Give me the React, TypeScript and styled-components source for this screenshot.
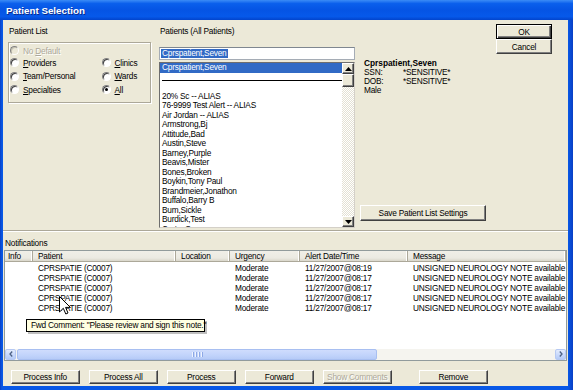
import React from 'react';
import styled, { createGlobalStyle } from 'styled-components';

const GlobalStyle = createGlobalStyle`
    html, body {
        margin: 0;
        padding: 0;
        background: #ffffff;
    }
    body {
        font-family: "Liberation Sans", Arial, sans-serif;
        font-size: 8.3px;
        letter-spacing: -0.22px;
        color: #000;
    }
    * {
        box-sizing: border-box;
    }
`;

const Window = styled.div`
    position: relative;
    width: 573px;
    height: 390px;
    display: flex;
    flex-direction: column;
    overflow: hidden;
    background: linear-gradient(90deg, #0a3fc4 0px, #0858e6 2px, #0858e6 568px, #0a3fc4 573px);
`;

const TitleBar = styled.div`
    flex: none;
    height: 20px;
    display: flex;
    align-items: center;
    padding: 1px 0 0 6px;
    background: linear-gradient(
        180deg,
        #3b8cf6 0%,
        #0a5fec 18%,
        #0554e4 50%,
        #0659ea 82%,
        #0244cc 100%
    );
    color: #fff;
    font-weight: bold;
    font-size: 9.8px;
    letter-spacing: 0;
    text-shadow: 1px 1px 0 #0b2a8a;
`;

const Body = styled.div`
    flex: 1;
    display: flex;
    flex-direction: column;
    margin: 0 5px 4px 3px;
    background: #ece9d8;
    min-height: 0;
`;

/* ---------- top pane ---------- */

const TopPane = styled.div`
    flex: none;
    height: 211px;
    display: flex;
    padding-top: 4px;
    border-bottom: 1px solid #aca899;
    box-shadow: 0 1px 0 #ffffff;
`;

const LeftCol = styled.div`
    width: 143px;
    margin-left: 5px;
    display: flex;
    flex-direction: column;
`;

const PatientsCol = styled.div`
    width: 196px;
    margin-left: 8px;
    display: flex;
    flex-direction: column;
`;

const InfoCol = styled.div`
    width: 130px;
    margin-left: 5px;
    display: flex;
    flex-direction: column;
    padding-top: 34.6px;
    padding-bottom: 9.5px;
`;

const ButtonCol = styled.div`
    width: 56px;
    margin-left: 6px;
    display: flex;
    flex-direction: column;
`;

const Caption = styled.div`
    height: 10px;
    line-height: 10px;
    margin-top: 2px;
    padding-left: 1px;
    white-space: nowrap;
`;

const GroupBox = styled.div`
    margin-top: 6px;
    height: 61px;
    border: 1px solid #aca899;
    box-shadow: inset 1px 1px 0 #ffffff, 1px 1px 0 #ffffff;
    display: grid;
    grid-template-columns: 91.5px 1fr;
    grid-template-rows: 11px 13px 14px 13px;
    padding: 2px 0 0 1px;
`;

const RadioRow = styled.label<{ $disabled?: boolean }>`
    display: flex;
    align-items: center;
    gap: 4px;
    white-space: nowrap;
    color: ${(p) => (p.$disabled ? '#aca899' : '#000')};
    text-shadow: ${(p) => (p.$disabled ? '1px 1px 0 #ffffff' : 'none')};
`;

const RadioCircle = styled.span<{ $checked?: boolean; $disabled?: boolean }>`
    position: relative;
    flex: none;
    width: 9px;
    height: 9px;
    border-radius: 50%;
    border: 1px solid;
    border-color: #808080 #ffffff #ffffff #808080;
    background: ${(p) => (p.$disabled ? '#ece9d8' : '#ffffff')};
    box-shadow: inset 1px 1px 0 ${(p) => (p.$disabled ? '#c5c2b2' : '#404040')};

    &::after {
        content: '';
        display: ${(p) => (p.$checked ? 'block' : 'none')};
        position: absolute;
        left: 2px;
        top: 2px;
        width: 3px;
        height: 3px;
        border-radius: 50%;
        background: #000;
    }
`;

const EditBox = styled.div`
    margin-top: 11px;
    height: 13px;
    background: #fff;
    border: 1px solid #a5acb5;
    border-top-color: #7f8790;
    display: flex;
    align-items: center;
    padding-left: 1px;
`;

const Highlight = styled.span`
    background: #316ac5;
    color: #fff;
    line-height: 9px;
    padding: 0 1px;
`;

const ListBox = styled.div`
    margin-top: 2px;
    height: 166px;
    display: flex;
    background: #fff;
    border: 1px solid;
    border-color: #6e6e6e #d4d0c8 #d4d0c8 #6e6e6e;
`;

const ListItems = styled.div`
    flex: 1;
    overflow: hidden;
`;

const ListItem = styled.div<{ $selected?: boolean }>`
    height: 9.5px;
    line-height: 9.5px;
    padding-left: 2px;
    white-space: nowrap;
    background: ${(p) => (p.$selected ? '#316ac5' : 'transparent')};
    color: ${(p) => (p.$selected ? '#fff' : '#000')};
`;

const SeparatorItem = styled.div`
    height: 9.5px;
    padding: 0 0 0 2px;
    display: flex;
    align-items: flex-end;

    &::after {
        content: '';
        flex: 1;
        height: 1px;
        margin-bottom: 1px;
        background: #000;
    }
`;

const VScroll = styled.div`
    width: 12px;
    flex: none;
    display: flex;
    flex-direction: column;
    background: repeating-conic-gradient(#ffffff 0 25%, #e4e1d3 0 50%) 0 0 / 2px 2px;
`;

const ClassicBtn = styled.div<{ $h: number }>`
    height: ${(p) => p.$h}px;
    flex: none;
    display: flex;
    align-items: center;
    justify-content: center;
    background: #ece9d8;
    border: 1px solid;
    border-color: #ffffff #404040 #404040 #ffffff;
    box-shadow: inset -1px -1px 0 #808080;
`;

const Track = styled.div`
    flex: 1;
`;

const InfoName = styled.div`
    font-weight: bold;
    line-height: 9.3px;
    padding-left: 4px;
    letter-spacing: 0;
`;

const InfoLine = styled.div`
    display: flex;
    line-height: 9.3px;
    padding-left: 4px;
`;

const InfoKey = styled.span`
    width: 39px;
`;

const Button = styled.button<{ $default?: boolean; $w?: number; $h?: number }>`
    flex: none;
    width: ${(p) => (p.$w ? `${p.$w}px` : '100%')};
    height: ${(p) => p.$h ?? 15}px;
    padding: 0;
    font-family: inherit;
    font-size: 8.3px;
    letter-spacing: -0.22px;
    color: #000;
    background: #ece9d8;
    border: 1px solid;
    border-color: ${(p) => (p.$default ? '#000' : '#ffffff #404040 #404040 #ffffff')};
    box-shadow: ${(p) =>
        p.$default
            ? 'inset 1px 1px 0 #ffffff, inset -1px -1px 0 #404040, inset -2px -2px 0 #808080'
            : 'inset -1px -1px 0 #808080'};
    &:disabled {
        color: #aca899;
        text-shadow: 1px 1px 0 #ffffff;
    }
`;

const SaveButton = styled(Button)`
    margin-top: auto;
`;

/* ---------- notifications ---------- */

const SectionLabel = styled.div`
    flex: none;
    height: 10px;
    line-height: 10px;
    margin-top: 7px;
    padding-left: 2px;
`;

const ListView = styled.div`
    flex: 1;
    margin: 2px 1px 0 1px;
    display: flex;
    flex-direction: column;
    background: #fff;
    border: 1px solid #919b9c;
    overflow: hidden;
    min-height: 0;
`;

const columns = '28px 143px 54px 70px 108px 1fr';

const HeaderRow = styled.div`
    flex: none;
    height: 11px;
    display: grid;
    grid-template-columns: ${columns};
    background: linear-gradient(180deg, #f0efe8 0%, #ebeae2 70%, #d9d6ca 100%);
    border-bottom: 1px solid #aca899;
`;

const HeaderCell = styled.div<{ $first?: boolean }>`
    line-height: 10px;
    padding-left: ${(p) => (p.$first ? 3 : 5)}px;
    border-right: 1px solid #aca899;
    box-shadow: inset -1px 0 0 #ffffff;
    white-space: nowrap;
    overflow: hidden;
`;

const Rows = styled.div`
    flex: 1;
    padding-top: 1.3px;
    overflow: hidden;
`;

const Row = styled.div`
    height: 10px;
    display: grid;
    grid-template-columns: ${columns};
`;

const Cell = styled.div`
    line-height: 10px;
    padding-left: 5px;
    white-space: nowrap;
    overflow: hidden;
`;

const HScroll = styled.div`
    flex: none;
    height: 10.5px;
    display: flex;
    background: #f5f4ef;
`;

const XpBtn = styled.div`
    width: 11px;
    flex: none;
    display: flex;
    align-items: center;
    justify-content: center;
    background: linear-gradient(180deg, #e3ecfe 0%, #c6d7fb 60%, #b5cbf6 100%);
    border: 1px solid #b6c9f3;
    border-radius: 2px;
`;

const XpThumb = styled.div`
    width: 360px;
    flex: none;
    margin-left: 1px;
    display: flex;
    align-items: center;
    justify-content: center;
    gap: 1px;
    background: linear-gradient(180deg, #cfdcfd 0%, #c2d4fb 55%, #b6cbf7 100%);
    border: 1px solid #a8bff1;
    border-radius: 2px;
`;

const Grip = styled.span`
    width: 1px;
    height: 5px;
    background: #eef3fe;
    box-shadow: 1px 0 0 #8da8e6;
    margin-right: 1px;
`;

const ButtonRow = styled.div`
    flex: none;
    display: flex;
    align-items: center;
    padding: 9px 0 2.5px 8px;
    gap: 9.5px;
`;

const PushedButton = styled(Button)`
    margin-left: 18px;
`;

/* ---------- overlays ---------- */

const Tooltip = styled.div`
    position: absolute;
    left: 26px;
    top: 319px;
    width: 179px;
    height: 13px;
    line-height: 11px;
    padding-left: 4px;
    background: #ffffe1;
    border: 1px solid #000;
    box-shadow: 2px 2px 0 rgba(0, 0, 0, 0.25);
    white-space: nowrap;
`;

const Cursor = styled.svg`
    position: absolute;
    left: 59px;
    top: 296px;
`;

const Tri = ({ dir }: { dir: 'up' | 'down' }) => (
    <svg width="7" height="4" viewBox="0 0 7 4">
        <polygon points={dir === 'up' ? '3.5,0 7,4 0,4' : '0,0 7,0 3.5,4'} fill="#000" />
    </svg>
);

const Chevron = ({ dir }: { dir: 'left' | 'right' }) => (
    <svg width="4" height="6" viewBox="0 0 4 6">
        <polyline
            points={dir === 'left' ? '3.2,0.5 1,3 3.2,5.5' : '0.8,0.5 3,3 0.8,5.5'}
            fill="none"
            stroke="#4d6185"
            strokeWidth="1.3"
        />
    </svg>
);

const Radio: React.FC<{
    label: string;
    accel: number;
    checked?: boolean;
    disabled?: boolean;
}> = ({ label, accel, checked, disabled }) => (
    <RadioRow $disabled={disabled}>
        <RadioCircle $checked={checked} $disabled={disabled} />
        <span>
            {label.slice(0, accel)}
            <u>{label[accel]}</u>
            {label.slice(accel + 1)}
        </span>
    </RadioRow>
);

const patients = [
    '20% Sc -- ALIAS',
    '76-9999 Test Alert -- ALIAS',
    'Air Jordan -- ALIAS',
    'Armstrong,Bj',
    'Attitude,Bad',
    'Austin,Steve',
    'Barney,Purple',
    'Beavis,Mister',
    'Bones,Broken',
    'Boykin,Tony Paul',
    'Brandmeier,Jonathon',
    'Buffalo,Barry B',
    'Bum,Sickle',
    'Burdick,Test',
    'Carter,Sam',
];

const alerts = ['08:19', '08:17', '08:17', '08:17', '08:17'];

export default function App() {
    return (
        <>
            <GlobalStyle />
            <Window>
                <TitleBar>Patient Selection</TitleBar>
                <Body>
                    <TopPane>
                        <LeftCol>
                            <Caption>Patient List</Caption>
                            <GroupBox>
                                <Radio label="No Default" accel={3} disabled />
                                <span />
                                <Radio label="Providers" accel={0} />
                                <Radio label="Clinics" accel={0} />
                                <Radio label="Team/Personal" accel={0} />
                                <Radio label="Wards" accel={0} />
                                <Radio label="Specialties" accel={0} />
                                <Radio label="All" accel={0} checked />
                            </GroupBox>
                        </LeftCol>

                        <PatientsCol>
                            <Caption>Patients (All Patients)</Caption>
                            <EditBox>
                                <Highlight>Cprspatient,Seven</Highlight>
                            </EditBox>
                            <ListBox>
                                <ListItems>
                                    <ListItem $selected>Cprspatient,Seven</ListItem>
                                    <SeparatorItem />
                                    <ListItem />
                                    {patients.map((name) => (
                                        <ListItem key={name}>{name}</ListItem>
                                    ))}
                                </ListItems>
                                <VScroll>
                                    <ClassicBtn $h={11}>
                                        <Tri dir="up" />
                                    </ClassicBtn>
                                    <ClassicBtn $h={13} />
                                    <Track />
                                    <ClassicBtn $h={11}>
                                        <Tri dir="down" />
                                    </ClassicBtn>
                                </VScroll>
                            </ListBox>
                        </PatientsCol>

                        <InfoCol>
                            <InfoName>Cprspatient,Seven</InfoName>
                            <InfoLine>
                                <InfoKey>SSN:</InfoKey>*SENSITIVE*
                            </InfoLine>
                            <InfoLine>
                                <InfoKey>DOB:</InfoKey>*SENSITIVE*
                            </InfoLine>
                            <InfoLine>Male</InfoLine>
                            <SaveButton $w={126} $h={15.5}>
                                Save Patient List Settings
                            </SaveButton>
                        </InfoCol>

                        <ButtonCol>
                            <Button $default>OK</Button>
                            <Button>Cancel</Button>
                        </ButtonCol>
                    </TopPane>

                    <SectionLabel>Notifications</SectionLabel>
                    <ListView>
                        <HeaderRow>
                            <HeaderCell $first>Info</HeaderCell>
                            <HeaderCell>Patient</HeaderCell>
                            <HeaderCell>Location</HeaderCell>
                            <HeaderCell>Urgency</HeaderCell>
                            <HeaderCell>Alert Date/Time</HeaderCell>
                            <HeaderCell>Message</HeaderCell>
                        </HeaderRow>
                        <Rows>
                            {alerts.map((time, i) => (
                                <Row key={i}>
                                    <Cell />
                                    <Cell>CPRSPATIE (C0007)</Cell>
                                    <Cell />
                                    <Cell>Moderate</Cell>
                                    <Cell>11/27/2007@{time}</Cell>
                                    <Cell>UNSIGNED NEUROLOGY NOTE available for signature</Cell>
                                </Row>
                            ))}
                        </Rows>
                        <HScroll>
                            <XpBtn>
                                <Chevron dir="left" />
                            </XpBtn>
                            <XpThumb>
                                <Grip />
                                <Grip />
                                <Grip />
                                <Grip />
                            </XpThumb>
                            <Track />
                            <XpBtn>
                                <Chevron dir="right" />
                            </XpBtn>
                        </HScroll>
                    </ListView>

                    <ButtonRow>
                        <Button $w={68.5} $h={14}>Process Info</Button>
                        <Button $w={68.5} $h={14}>Process All</Button>
                        <Button $w={68.5} $h={14}>Process</Button>
                        <Button $w={68.5} $h={14}>Forward</Button>
                        <Button $w={68.5} $h={14} disabled>
                            Show Comments
                        </Button>
                        <PushedButton $w={68.5} $h={14}>Remove</PushedButton>
                    </ButtonRow>
                </Body>

                <Tooltip>Fwd Comment: "Please review and sign this note."</Tooltip>
                <Cursor width="12" height="19" viewBox="0 0 12 19">
                    <polygon
                        points="0.5,0.5 0.5,16 4.3,12.3 6.8,18 9,17 6.6,11.4 11.4,11.4"
                        fill="#fff"
                        stroke="#000"
                        strokeWidth="1"
                        strokeLinejoin="miter"
                    />
                </Cursor>
            </Window>
        </>
    );
}
